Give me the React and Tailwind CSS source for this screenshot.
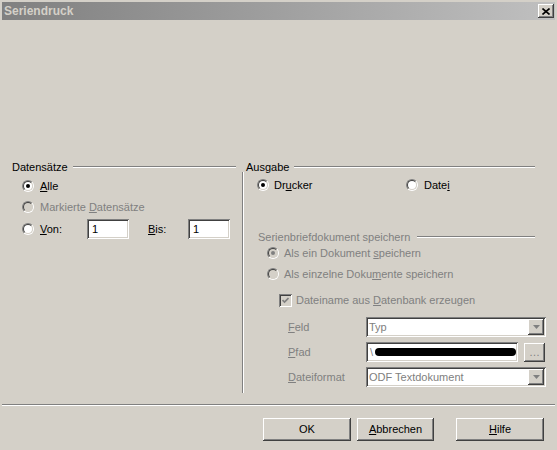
import React from 'react';

const raised = 'shadow-[inset_-1px_-1px_#404040,inset_1px_1px_#ffffff,inset_-2px_-2px_#808080,inset_2px_2px_#d4d0c8]';
const sunken = 'shadow-[inset_1px_1px_#808080,inset_-1px_-1px_#ffffff,inset_2px_2px_#404040,inset_-2px_-2px_#d4d0c8]';

function Radio({ checked, disabled }) {
  return (
    <span className="relative block w-[12px] h-[12px] rounded-full shrink-0 border border-[#808080] border-r-white border-b-white">
      <span className={`absolute inset-0 rounded-full border border-[#404040] border-r-[#d4d0c8] border-b-[#d4d0c8] ${disabled ? 'bg-[#d4d0c8]' : 'bg-white'}`} />
      {checked && (
        <span className={`absolute left-[3px] top-[3px] w-[4px] h-[4px] rounded-full ${disabled ? 'bg-[#808080]' : 'bg-black'}`} />
      )}
    </span>
  );
}

function Line({ className }) {
  return <div className={`flex-1 h-[2px] border-t border-t-[#808080] border-b border-b-white ${className}`} />;
}

function Arrow() {
  return (
    <svg width="7" height="4" viewBox="0 0 7 4">
      <path d="M0 0 H7 L3.5 4 Z" fill="#808080" />
    </svg>
  );
}

function Combo({ text }) {
  return (
    <div className={`w-[180px] h-[20px] bg-white ${sunken} flex items-center pl-[3px] pr-[2px]`}>
      <span className="flex-1 text-[#808080]">{text}</span>
      <div className={`w-[16px] h-[16px] bg-[#d4d0c8] ${raised} flex items-center justify-center`}>
        <Arrow />
      </div>
    </div>
  );
}

function U({ children }) {
  return <span className="underline underline-offset-[1px]">{children}</span>;
}

export default function App() {
  return (
    <div className="w-[557px] h-[450px] bg-[#d4d0c8] pt-[2px] px-[2px] flex flex-col overflow-hidden font-['Liberation_Sans',Arial,sans-serif] text-[11px] leading-[13px] text-black">
      {/* Title bar */}
      <div className="h-[18px] shrink-0 bg-linear-to-r from-[#808080] to-[#c0c0c0] flex items-center justify-between pl-[2px] pr-[1px]">
        <span className="font-bold text-[12px] text-[#d4d0c8]">Seriendruck</span>
        <div className={`w-[16px] h-[14px] bg-[#d4d0c8] ${raised} flex items-center justify-center`}>
          <svg width="8" height="7" viewBox="0 0 8 7">
            <path d="M0.5 0.5 L7.5 6.5 M7.5 0.5 L0.5 6.5" stroke="#000" strokeWidth="1.6" />
          </svg>
        </div>
      </div>

      <div className="h-[140px] shrink-0" />

      <div className="flex h-[233px] shrink-0">
        {/* Datensätze */}
        <div className="w-[240px] pl-[10px] flex flex-col">
          <div className="h-[14px] flex items-center">
            <span>Datensätze</span>
            <Line className="ml-[5px] mr-[6px]" />
          </div>
          <div className="mt-[5px] h-[14px] flex items-center pl-[10px] gap-[6px]">
            <Radio checked />
            <span><U>A</U>lle</span>
          </div>
          <div className="mt-[7px] h-[14px] flex items-center pl-[10px] gap-[6px] text-[#808080]">
            <Radio disabled />
            <span>Markierte <U>D</U>atensätze</span>
          </div>
          <div className="mt-[5px] h-[20px] flex items-center pl-[10px]">
            <Radio />
            <span className="ml-[6px] w-[47px]"><U>V</U>on:</span>
            <div className={`w-[42px] h-[20px] bg-white ${sunken} flex items-center pl-[5px]`}>1</div>
            <span className="ml-[19px] w-[40px]"><U>B</U>is:</span>
            <div className={`w-[42px] h-[20px] bg-white ${sunken} flex items-center pl-[5px]`}>1</div>
          </div>
        </div>

        {/* Ausgabe */}
        <div className="flex-1 flex flex-col">
          <div className="h-[14px] flex items-center pl-[4px]">
            <span>Ausgabe</span>
            <Line className="ml-[5px] mr-[20px]" />
          </div>
          <div className="flex-1 -mt-[2px] pt-[2px] border-l border-[#808080] shadow-[inset_1px_0_#ffffff] flex flex-col">
            <div className="mt-[4px] h-[14px] flex items-center pl-[14px]">
              <div className="w-[149px] flex items-center gap-[5px]">
                <Radio checked />
                <span>Dr<U>u</U>cker</span>
              </div>
              <div className="flex items-center gap-[6px]">
                <Radio />
                <span>Date<U>i</U></span>
              </div>
            </div>

            <div className="mt-[38px] h-[14px] flex items-center pl-[15px] text-[#808080]">
              <span>Serienbriefdokument speichern</span>
              <Line className="ml-[7px] mr-[20px]" />
            </div>
            <div className="mt-[2px] h-[14px] flex items-center pl-[24px] gap-[5px] text-[#808080]">
              <Radio checked disabled />
              <span>Als ein Dokument <U>s</U>peichern</span>
            </div>
            <div className="mt-[7px] h-[14px] flex items-center pl-[24px] gap-[5px] text-[#808080]">
              <Radio disabled />
              <span>Als einzelne Doku<U>m</U>ente speichern</span>
            </div>
            <div className="mt-[12px] h-[14px] flex items-center pl-[36px] gap-[4px] text-[#808080]">
              <div className={`w-[13px] h-[13px] bg-[#d4d0c8] ${sunken} flex items-center justify-center`}>
                <svg width="7" height="7" viewBox="0 0 7 7">
                  <path d="M0.5 3 L2.5 5 L6.5 1" stroke="#808080" strokeWidth="1.7" fill="none" />
                </svg>
              </div>
              <span>Dateiname aus <U>D</U>atenbank erzeugen</span>
            </div>

            <div className="mt-[10px] h-[20px] flex items-center pl-[45px] text-[#808080]">
              <span className="w-[78px]"><U>F</U>eld</span>
              <Combo text="Typ" />
            </div>
            <div className="mt-[5px] h-[20px] flex items-center pl-[45px] text-[#808080]">
              <span className="w-[78px]"><U>P</U>fad</span>
              <div className={`w-[152px] h-[20px] bg-white ${sunken} flex items-center pl-[4px] pr-[2px]`}>
                <span className="text-[#808080]">\</span>
                <div className="ml-[2px] flex-1 h-[8px] rounded-full bg-black" />
              </div>
              <div className={`ml-[6px] w-[21px] h-[19px] bg-[#d4d0c8] ${raised} flex items-center justify-center text-[#808080] leading-none`}>
                …
              </div>
            </div>
            <div className="mt-[5px] h-[20px] flex items-center pl-[45px] text-[#808080]">
              <span className="w-[78px]"><U>D</U>ateiformat</span>
              <Combo text="ODF Textdokument" />
            </div>
          </div>
        </div>
      </div>

      {/* Separator */}
      <div className="mt-[11px] h-[2px] shrink-0 border-t border-t-[#808080] border-b border-b-white" />

      {/* Buttons */}
      <div className="mt-[12px] h-[23px] shrink-0 flex justify-end pr-[11px]">
        <button className={`w-[88px] h-[23px] bg-[#d4d0c8] ${raised}`}>OK</button>
        <button className={`ml-[6px] w-[77px] h-[23px] bg-[#d4d0c8] ${raised}`}><U>A</U>bbrechen</button>
        <button className={`ml-[22px] w-[88px] h-[23px] bg-[#d4d0c8] ${raised}`}><U>H</U>ilfe</button>
      </div>
    </div>
  );
}
